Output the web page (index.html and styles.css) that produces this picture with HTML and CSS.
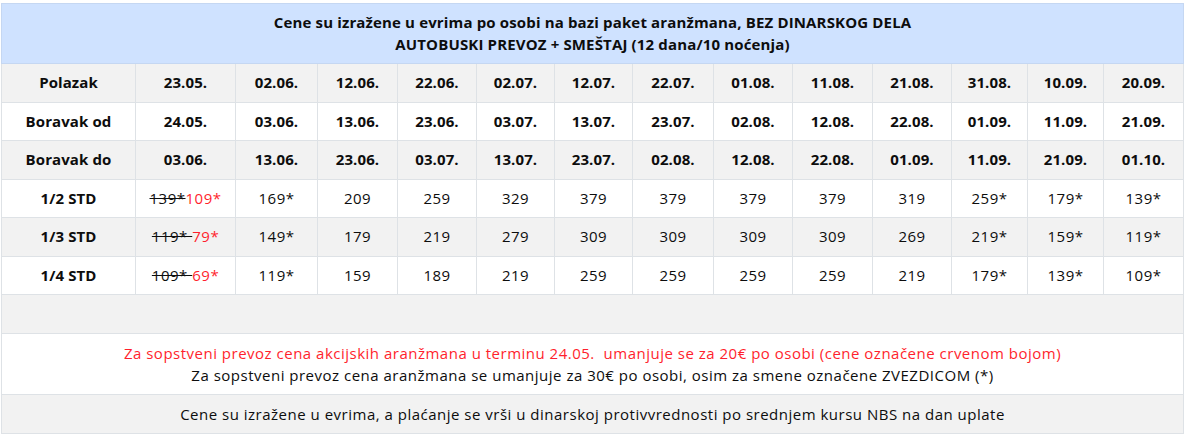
FILE: index.html
```html
<!DOCTYPE html>
<html lang="sr">
<head>
<meta charset="utf-8">
<title>Cene</title>
<link rel="stylesheet" href="styles.css">
</head>
<body>
<table class="prices">
  <colgroup>
    <col class="c-label">
    <col class="c-first">
    <col class="c82">
    <col class="c80">
    <col class="c79">
    <col class="c78">
    <col class="c78">
    <col class="c81">
    <col class="c79">
    <col class="c80">
    <col class="c79">
    <col class="c76">
    <col class="c76">
    <col class="c80">
  </colgroup>
  <tbody>
    <tr class="head">
      <td colspan="14">Cene su izražene u evrima po osobi na bazi paket aranžmana, BEZ DINARSKOG DELA<br>AUTOBUSKI PREVOZ + SMEŠTAJ (12 dana/10 noćenja)</td>
    </tr>
    <tr class="dates">
      <td>Polazak</td><td>23.05.</td><td>02.06.</td><td>12.06.</td><td>22.06.</td><td>02.07.</td><td>12.07.</td><td>22.07.</td><td>01.08.</td><td>11.08.</td><td>21.08.</td><td>31.08.</td><td>10.09.</td><td>20.09.</td>
    </tr>
    <tr class="dates">
      <td>Boravak od</td><td>24.05.</td><td>03.06.</td><td>13.06.</td><td>23.06.</td><td>03.07.</td><td>13.07.</td><td>23.07.</td><td>02.08.</td><td>12.08.</td><td>22.08.</td><td>01.09.</td><td>11.09.</td><td>21.09.</td>
    </tr>
    <tr class="dates">
      <td>Boravak do</td><td>03.06.</td><td>13.06.</td><td>23.06.</td><td>03.07.</td><td>13.07.</td><td>23.07.</td><td>02.08.</td><td>12.08.</td><td>22.08.</td><td>01.09.</td><td>11.09.</td><td>21.09.</td><td>01.10.</td>
    </tr>
    <tr class="price">
      <td>1/2 STD</td><td><del>139*</del><span class="red">109*</span></td><td>169*</td><td>209</td><td>259</td><td>329</td><td>379</td><td>379</td><td>379</td><td>379</td><td>319</td><td>259*</td><td>179*</td><td>139*</td>
    </tr>
    <tr class="price">
      <td>1/3 STD</td><td><del>119* </del><span class="red">79*</span></td><td>149*</td><td>179</td><td>219</td><td>279</td><td>309</td><td>309</td><td>309</td><td>309</td><td>269</td><td>219*</td><td>159*</td><td>119*</td>
    </tr>
    <tr class="price">
      <td>1/4 STD</td><td><del>109* </del><span class="red">69*</span></td><td>119*</td><td>159</td><td>189</td><td>219</td><td>259</td><td>259</td><td>259</td><td>259</td><td>219</td><td>179*</td><td>139*</td><td>109*</td>
    </tr>
    <tr class="blank">
      <td colspan="14">&nbsp;</td>
    </tr>
    <tr class="note">
      <td colspan="14"><span class="red">Za sopstveni prevoz cena akcijskih aranžmana u terminu 24.05.&nbsp; umanjuje se za 20€ po osobi (cene označene crvenom bojom)</span><br>Za sopstveni prevoz cena aranžmana se umanjuje za 30€ po osobi, osim za smene označene ZVEZDICOM (*)</td>
    </tr>
    <tr class="note">
      <td colspan="14">Cene su izražene u evrima, a plaćanje se vrši u dinarskoj protivvrednosti po srednjem kursu NBS na dan uplate</td>
    </tr>
  </tbody>
</table>
</body>
</html>
```

FILE: styles.css
```css
html, body {
  background: #ffffff;
}
body {
  margin: 3px 0 0 1px;
  font-family: "Open Sans", "DejaVu Sans", sans-serif;
  font-size: 15px;
  line-height: 21.5px;
  color: #0d0d0d;
}
.prices {
  border-collapse: collapse;
  table-layout: fixed;
  width: 1182px;
}
.c-label { width: 134px; }
.c-first { width: 100px; }
.c82 { width: 82px; }
.c81 { width: 81px; }
.c80 { width: 80px; }
.c79 { width: 79px; }
.c78 { width: 78px; }
.c76 { width: 76px; }

.prices td {
  border: 1px solid #dee2e6;
  padding: 8px;
  text-align: center;
  vertical-align: top;
  white-space: nowrap;
  letter-spacing: 0.5px;
}
.prices tr:nth-child(even) td {
  background: #f2f2f2;
}
.prices tr:nth-child(odd) td {
  background: #ffffff;
}
.prices tr.head td {
  background: #cfe2ff;
  border-color: #c5d7f2;
  font-weight: 700;
  letter-spacing: 0.15px;
}
.prices .dates td {
  font-weight: 700;
  letter-spacing: 0.1px;
}
.prices .price td:first-child {
  font-weight: 700;
  letter-spacing: 0.1px;
}
.prices .note td {
  line-height: 22px;
}
.red {
  color: #ff1f2d;
}
del {
  text-decoration: line-through;
  color: #0d0d0d;
}
```
